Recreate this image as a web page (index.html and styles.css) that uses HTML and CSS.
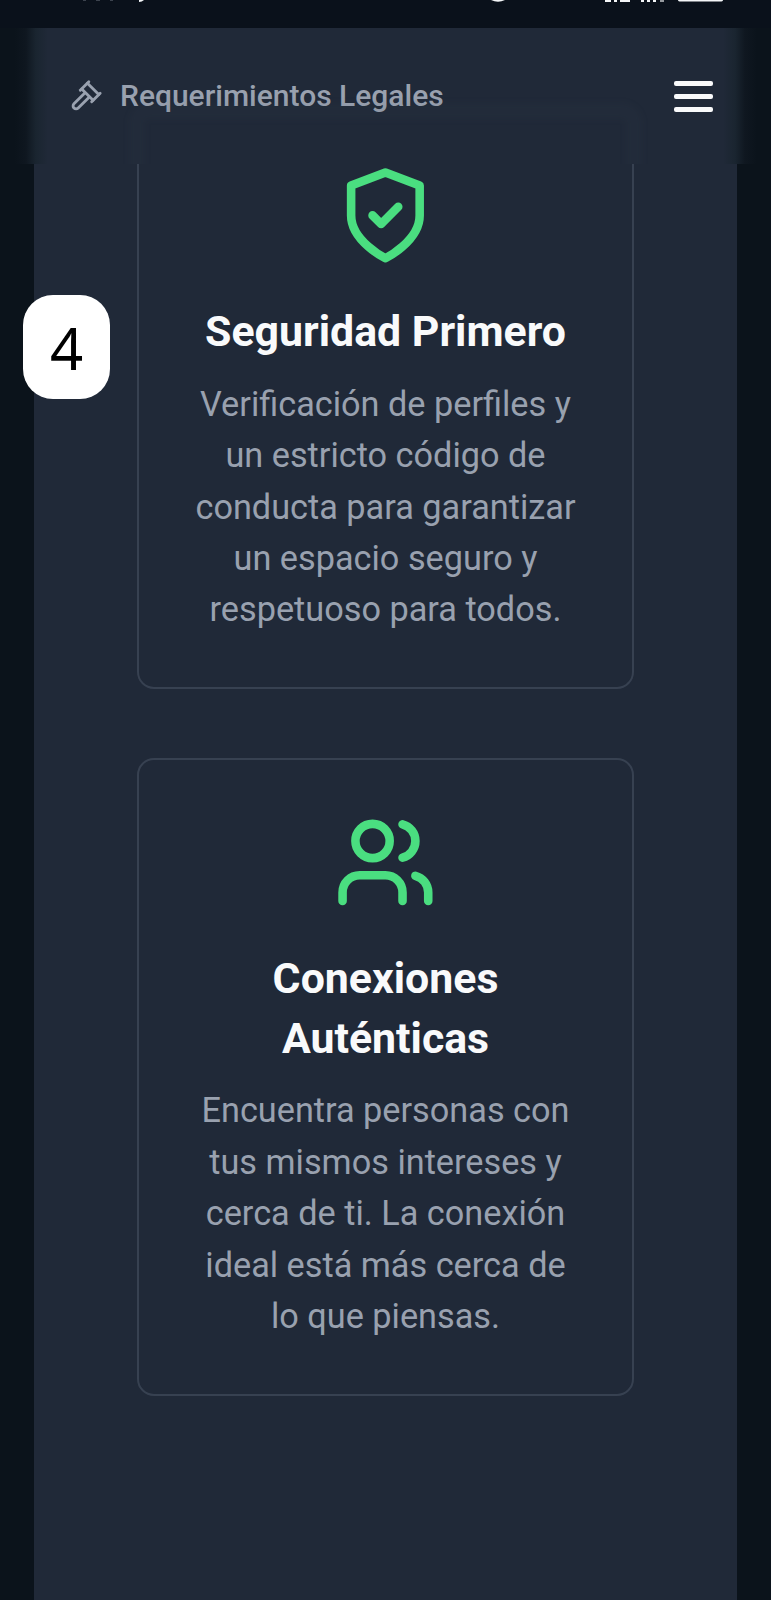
FILE: index.html
```
<!DOCTYPE html>
<html lang="es">
<head>
<meta charset="utf-8">
<title>Requerimientos Legales</title>
<link rel="stylesheet" href="styles.css">
</head>
<body>
<div class="status">
  <svg class="status-marks" viewBox="0 0 771 28">
    <g fill="#3c434e"><rect x="83" y="0" width="3" height="1"/><rect x="96" y="0" width="4" height="1"/><rect x="110" y="0" width="3" height="1"/></g>
    <g fill="#f4f6f8"><path d="M139 0h5q-2 2-5 2z"/><path d="M491 0h14q-7 3.500-14 0z"/>
    <path d="M605 0h6v2h-6zM614 0h3v2h-3zM620 0h10v2h-10zM641 0h3v2h-3zM647 0h3v2h-3zM653 0h3v2h-3zM678 0h45q0 1.500-3 1.500h-39q-3 0-3-1.500z"/><path opacity=".6" d="M660 0h4v2h-4z"/></g>
  </svg>
</div>
<header class="bar">
  <div class="bar-haze"></div>
  <div class="bar-title">
    <svg class="gavel" viewBox="0 0 24 24"><path d="m14 13-7.500 7.500c-.830.830-2.170.830-3 0a2.120 2.120 0 0 1 0-3L11 10"/><path d="m16 16 6-6"/><path d="m8 8 6-6"/><path d="m9 7 8 8"/><path d="m21 11-8-8"/></svg>
    <span>Requerimientos Legales</span>
  </div>
  <div class="menu"><i></i><i></i><i></i></div>
</header>
<main class="page">
  <section class="card first">
    <svg class="icon" viewBox="0 0 24 24"><path d="M12 22s8-4 8-10V5l-8-3-8 3v7c0 6 8 10 8 10"/><path d="m9 12 2 2 4-4"/></svg>
    <h2>Seguridad Primero</h2>
    <p>Verificación de perfiles y<br>un estricto código de<br>conducta para garantizar<br>un espacio seguro y<br>respetuoso para todos.</p>
  </section>
  <section class="card">
    <svg class="icon" viewBox="0 0 24 24"><path d="M16 21v-2a4 4 0 0 0-4-4H6a4 4 0 0 0-4 4v2"/><circle cx="9" cy="7" r="4"/><path d="M22 21v-2a4 4 0 0 0-3-3.870M16 3.130a4 4 0 0 1 0 7.750"/></svg>
    <h2>Conexiones<br>Auténticas</h2>
    <p>Encuentra personas con<br>tus mismos intereses y<br>cerca de ti. La conexión<br>ideal está más cerca de<br>lo que piensas.</p>
  </section>
</main>
<div class="badge">4</div>
</body>
</html>
```
FILE: styles.css
```
* { box-sizing: border-box; }
body { margin: 0; height: 1600px; overflow: hidden; position: relative; display: flex; flex-direction: column; background: #0b131b; font-family: Roboto, sans-serif; }
.status { height: 28px; background: #0a111b; }
.status-marks { display: block; width: 771px; height: 28px; }
.bar { position: relative; overflow: hidden; height: 136px; padding: 0 58px 0 69px; display: flex; align-items: center; justify-content: space-between; background: linear-gradient(90deg, #0b131b 15px, #0f1720 26px, #1a2530 36px, #202938 48px, #202938 723px, #1a2530 735px, #0f1720 745px, #0b131b 757px); }
.bar-haze { position: absolute; left: 129px; top: 75px; width: 513px; height: 100px; border: 16px solid rgba(65, 75, 94, .08); border-radius: 20px; filter: blur(3px); }
.bar-title { display: flex; align-items: center; gap: 17px; color: #99a1af; font-size: 30px; font-weight: 500; line-height: 43px; }
.bar-title span { margin-top: -2px; }
.gavel { width: 34px; height: 34px; fill: none; stroke: #99a1af; stroke-width: 2; stroke-linecap: round; stroke-linejoin: round; }
.menu { display: flex; flex-direction: column; gap: 8px; width: 39px; padding-top: 1px; }
.menu i { height: 5px; border-radius: 2px; background: #f9fafb; }
.page { flex: 1; margin: 0 34px; padding: 0 103px; background: #202938; display: flex; flex-direction: column; gap: 68.500px; }
.card { width: 497px; height: 638px; padding: 51px 0; border: 2px solid #374151; border-radius: 17px; display: flex; flex-direction: column; align-items: center; text-align: center; }
.first { height: 525px; padding-top: 0; border-top: 0; border-radius: 0 0 17px 17px; }
.icon { width: 102.800px; height: 102.800px; flex: none; fill: none; stroke: #4ade80; stroke-width: 2; stroke-linecap: round; stroke-linejoin: round; }
h2 { margin: 34.300px 0 17.700px; color: #f9fafb; font-size: 42.830px; line-height: 60px; font-weight: 700; white-space: nowrap; }
p { margin: 0; color: #99a1af; font-size: 34.270px; line-height: 51.400px; white-space: nowrap; }
.badge { position: absolute; left: 23px; top: 295px; width: 87px; height: 104px; border-radius: 30px; background: #fff; color: #000; font: 58px/105px "Noto Sans", sans-serif; text-align: center; }
```
